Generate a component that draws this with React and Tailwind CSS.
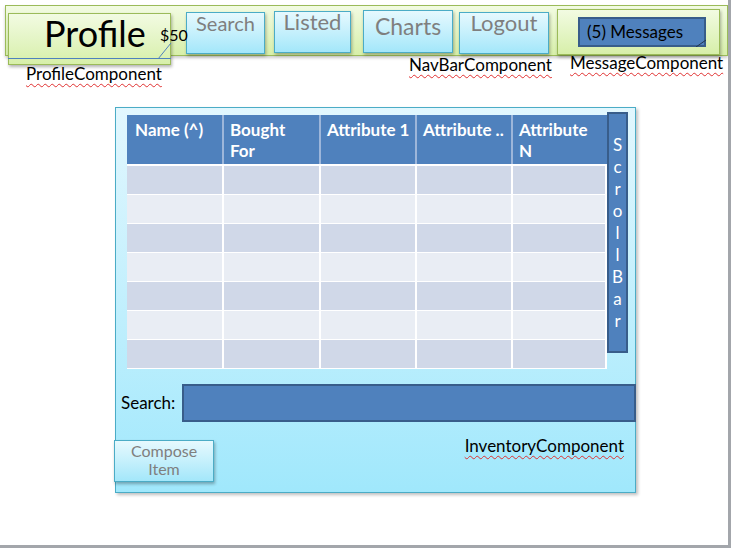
import React from 'react';

const COLS = ['w-[95px]', 'w-[97px]', 'w-[96px]', 'w-[96px]', 'w-[96px]'];
const HEADERS = [['Name (^)'], ['Bought', 'For'], ['Attribute 1'], ['Attribute ..'], ['Attribute', 'N']];
const ROWS = [0, 1, 2, 3, 4, 5, 6];

const cyanBtn =
  'border border-[#4bacc6] bg-gradient-to-b from-[#e6f9fe] to-[#a3e7fa] shadow-[1px_2px_3px_rgba(0,0,0,0.3)] text-[#7f7f7f]';
const greenBox =
  'border border-[#9bbb59] bg-gradient-to-b from-[#f2fbe2] to-[#d7efa9]';
const squiggle = 'underline decoration-wavy decoration-[#e03030] decoration-1 underline-offset-[3px]';

function NavButton({ label, className }) {
  return (
    <div className={`shrink-0 h-[42px] flex justify-center ${cyanBtn} ${className}`}>
      {label}
    </div>
  );
}

function Table() {
  return (
    <div className="mt-[3px] w-[480px] shrink-0 bg-white flex flex-col">
      <div className="flex h-[49px] bg-[#4f81bd] text-white font-bold text-[17px] leading-[21px]">
        {HEADERS.map((lines, i) => (
          <div
            key={i}
            className={`${COLS[i]} pt-[4px] ${i === 0 ? 'pl-[8px]' : 'pl-[6px] border-l-2 border-[#9db6da]'}`}
          >
            {lines.map(l => (
              <div key={l}>{l}</div>
            ))}
          </div>
        ))}
      </div>
      <div className="mt-[2px] flex flex-col gap-[1px] pb-[1px]">
        {ROWS.map(r => (
          <div key={r} className="flex h-[28px]">
            {COLS.map((w, i) => (
              <div
                key={i}
                className={`${w} ${r % 2 === 0 ? 'bg-[#d0d8e8]' : 'bg-[#e9edf4]'} ${i > 0 ? 'border-l-2 border-white' : ''} ${i === 4 ? 'border-r-2' : ''}`}
              />
            ))}
          </div>
        ))}
      </div>
    </div>
  );
}

export default function App() {
  return (
    <div className="w-[731px] h-[548px] bg-[#a3a6ab] font-['Lato',sans-serif] text-black">
      <div className="w-[728px] h-[545px] bg-white overflow-hidden flex flex-col">
        {/* nav bar */}
        <div className={`relative mt-[5px] ml-[5px] w-[723px] h-[51px] shrink-0 flex items-start shadow-[0_2px_3px_rgba(0,0,0,0.2)] ${greenBox}`}>
          <div className={`relative z-10 ml-[2px] mt-[7px] w-[163px] h-[52px] shrink-0 pl-[35px] pt-[2px] text-[36px] leading-[35px] shadow-[1px_2px_3px_rgba(0,0,0,0.3)] ${greenBox}`}>
            Profile
            <svg className="absolute left-[-1px] top-[-1px]" width="163" height="52">
              <line x1="0" y1="45.5" x2="163" y2="45.5" stroke="#4f81bd" strokeWidth="1" />
              <line x1="150" y1="46" x2="163" y2="30" stroke="#4f81bd" strokeWidth="1" />
            </svg>
            <span className="absolute left-[151px] top-[13px] text-[16px] leading-[16px]">$50</span>
          </div>
          <NavButton label="Search" className="ml-[15px] mt-[6px] w-[79px] text-[20px] leading-[20px]" />
          <NavButton label="Listed" className="ml-[9px] mt-[5px] w-[77px] text-[22px] leading-[20px]" />
          <NavButton label="Charts" className="ml-[12px] mt-[4px] w-[90px] h-[43px] pt-[4px] text-[23px] leading-[22px]" />
          <NavButton label="Logout" className="ml-[6px] mt-[6px] w-[90px] text-[22px] leading-[20px]" />
          <div className={`relative ml-[8px] mt-[3px] w-[163px] h-[46px] shrink-0 shadow-[1px_2px_3px_rgba(0,0,0,0.3)] ${greenBox}`}>
            <div className="relative ml-[20px] mt-[7px] w-[128px] h-[30px] border-2 border-[#385d8a] bg-[#4f81bd] flex items-center pl-[7px] text-[17px]">
              (5) Messages
              <svg className="absolute right-[-2px] bottom-[-2px]" width="10" height="8">
                <line x1="0" y1="8" x2="10" y2="1" stroke="#1f3550" strokeWidth="1" />
              </svg>
            </div>
          </div>
        </div>

        {/* component labels */}
        <div className="-mt-[4px] h-[20px] flex items-start text-[17px] leading-[20px] relative z-20">
          <div className="w-[409px] shrink-0 pl-[26px] mt-[12px]">
            <span className={squiggle}>ProfileComponent</span>
          </div>
          <div className="w-[161px] shrink-0 mt-[3px]">
            <span className={squiggle}>NavBarComponent</span>
          </div>
          <div className="mt-[1px]">
            <span className={squiggle}>MessageComponent</span>
          </div>
        </div>

        {/* inventory */}
        <div className="mt-[35px] ml-[115px] w-[521px] h-[386px] shrink-0 border border-[#4bacc6] bg-gradient-to-b from-[#e2f7fe] to-[#a0e8fc] shadow-[2px_2px_3px_rgba(0,0,0,0.25)] flex flex-col">
          <div className="flex items-start pt-[4px] pl-[11px]">
            <Table />
            <div className="w-[21px] h-[241px] shrink-0 border-2 border-[#385d8a] bg-[#4f81bd] text-white text-[17px] leading-[22px] flex flex-col items-center justify-center">
              {'ScrollBar'.split('').map((c, i) => (
                <span key={i}>{c}</span>
              ))}
            </div>
          </div>

          <div className="mt-[15px] flex items-center pl-[5px] -mr-[1px]">
            <span className="w-[61px] shrink-0 text-[17px]">Search:</span>
            <div className="flex-1 h-[38px] border-2 border-[#385d8a] bg-[#4f81bd]" />
          </div>

          <div className="mt-[18px] flex items-start pr-[11px]">
            <div className={`-ml-[2px] w-[100px] h-[42px] shrink-0 pt-[1px] text-center text-[16px] leading-[18px] ${cyanBtn}`}>
              Compose
              <br />
              Item
            </div>
            <span className={`ml-auto -mt-[4px] text-[17px] leading-[20px] ${squiggle}`}>InventoryComponent</span>
          </div>
        </div>
      </div>
    </div>
  );
}
